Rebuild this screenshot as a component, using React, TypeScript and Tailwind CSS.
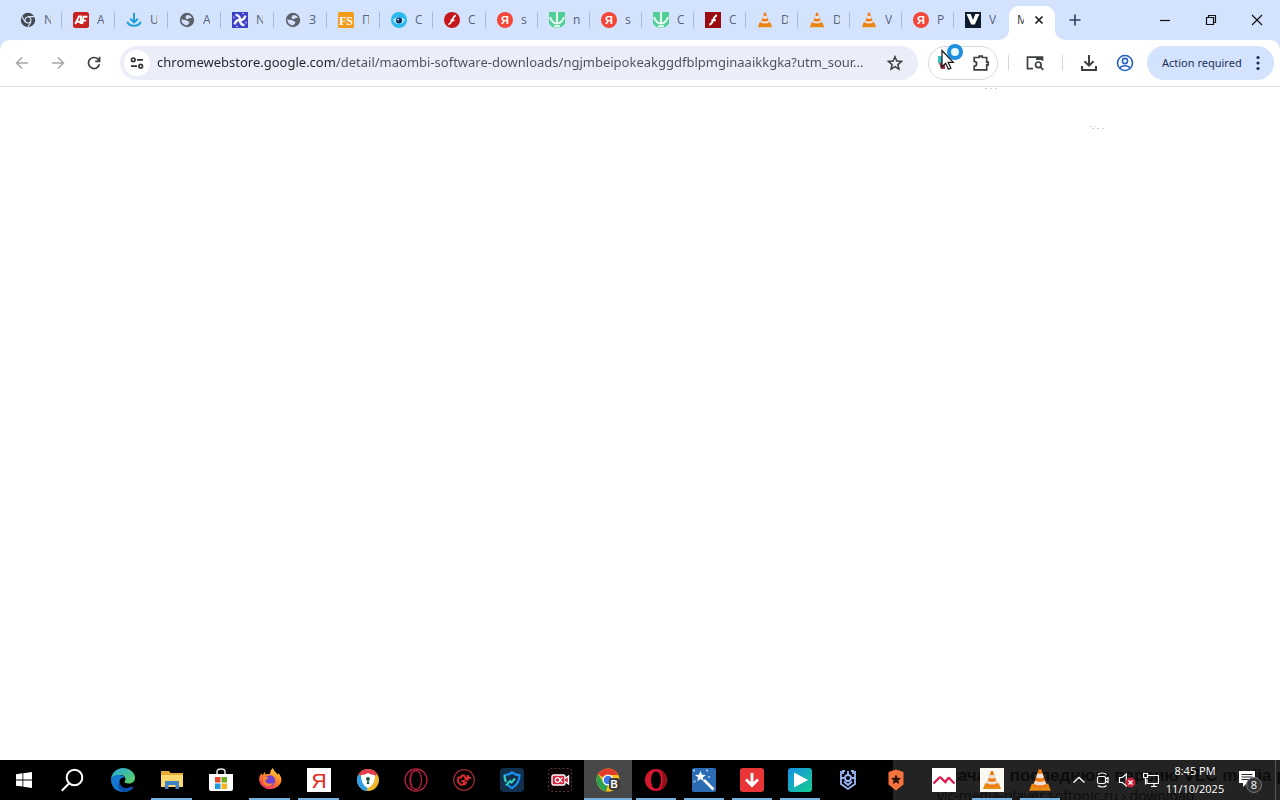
import type { ReactNode } from 'react';

interface Tab {
  label: string;
  icon: ReactNode;
}

interface TaskbarApp {
  name: string;
  icon: ReactNode;
  open?: boolean;
  active?: boolean;
}

/* ---------- tab favicons, 16x16 ---------- */

const ChromeMono = () => (
  <svg viewBox="0 0 16 16" className="size-4 shrink-0">
    <circle cx="8" cy="8" r="7.2" fill="#44484f" />
    <path d="M8 4.6h6.4M5 9.7 1.9 4.4M11 9.7 7.9 15" stroke="#d3e3fd" strokeWidth="1.1" />
    <circle cx="8" cy="8" r="3.5" fill="#d3e3fd" />
    <circle cx="8" cy="8" r="2.4" fill="#44484f" />
  </svg>
);

const AfIcon = () => (
  <svg viewBox="0 0 16 16" className="size-4 shrink-0">
    <rect width="16" height="16" rx="2.5" fill="#c9211e" />
    <path d="M2.2 12 6 4.4h2L7.6 12M3.8 9.8h4M9.2 12l1.2-7.2h4M9.8 8.6h3.4" fill="none" stroke="#fff" strokeWidth="1.9" />
  </svg>
);

const BlueDownload = () => (
  <svg viewBox="0 0 16 16" className="size-4 shrink-0" fill="none" stroke="#1e9fdc" strokeWidth="2">
    <path d="M8 1v9M4.2 6.8 8 10.4l3.8-3.6M1.4 9.8C2.4 15 13.6 15 14.6 9.8" />
  </svg>
);

const Globe = () => (
  <svg viewBox="0 0 16 16" className="size-4 shrink-0">
    <circle cx="8" cy="8" r="7.2" fill="#5b626b" />
    <path d="M8.500 3c2 0 3.600 1 4.400 2.600-1.600.9-2.400.2-3.400 1.200-.8.8-2.800.2-3-1C6.400 4.600 7.200 3.600 8.500 3Z" fill="#d3e3fd" />
    <path d="M2.400 7.200c2 .8 4 .2 5.400 1.400.8.8 2.400.6 2.600 2-.2 1.400-1.600 1.400-2.200 2.800C4.800 13.200 2.200 10.600 2.400 7.200Z" fill="#d3e3fd" />
  </svg>
);

const Pinwheel = () => (
  <svg viewBox="0 0 16 16" className="size-4 shrink-0">
    <rect width="16" height="16" fill="#3c41c4" />
    <g fill="none" stroke="#f2f3ff" strokeWidth="2.400">
      <path d="M8 8C8.200 5.400 6.600 3.400 3.600 2.600" />
      <path d="M8 8c2.600.2 4.600-1.400 5.400-4.400" />
      <path d="M8 8c-.2 2.600 1.400 4.600 4.400 5.400" />
      <path d="M8 8c-2.600-.2-4.600 1.400-5.400 4.400" />
    </g>
    <path d="M10 1.500h2M14 9.500v2M4 14.500h2M2 4.500v2" stroke="#b9bdf7" strokeWidth="1.200" />
  </svg>
);

const FsIcon = () => (
  <svg viewBox="0 0 16 16" className="size-4 shrink-0">
    <rect width="16" height="16" rx="1.500" fill="#f39a1c" />
    <text x="8" y="12.500" fontSize="12" fontWeight="700" textAnchor="middle" fill="#fff" fontFamily="Liberation Serif, serif">FS</text>
  </svg>
);

const EyeIcon = () => (
  <svg viewBox="0 0 16 16" className="size-4 shrink-0">
    <circle cx="8" cy="8" r="8" fill="#2bb9ee" />
    <path d="M2 7.800C4 4.800 12 4.800 14 7.800 13 13.500 3 13.500 2 7.800Z" fill="#a9e8fb" />
    <circle cx="8" cy="8.600" r="3" fill="#0d2857" />
    <circle cx="7.200" cy="7.600" r=".9" fill="#fff" />
  </svg>
);

const FlashRound = () => (
  <svg viewBox="0 0 16 16" className="size-4 shrink-0">
    <circle cx="8" cy="8" r="8" fill="#c4161c" />
    <path d="M11.800 3.600C8 3.600 8.600 12.200 4.400 12.400M6.400 8.300h4" fill="none" stroke="#fff" strokeWidth="1.700" />
  </svg>
);

const FlashSquare = () => (
  <svg viewBox="0 0 16 16" className="size-4 shrink-0">
    <rect width="16" height="16" fill="#9b0a10" />
    <path d="M12 3.600C8 3.600 8.600 12.600 4.200 12.600M6.400 8.300h4.400" fill="none" stroke="#fff" strokeWidth="2" />
  </svg>
);

const YandexRound = () => (
  <svg viewBox="0 0 16 16" className="size-4 shrink-0">
    <circle cx="8" cy="8" r="8" fill="#f4473a" />
    <text x="8" y="12" fontSize="11" fontWeight="700" textAnchor="middle" fill="#fff" fontFamily="Liberation Sans, sans-serif">Я</text>
  </svg>
);

const GreenDown = () => (
  <svg viewBox="0 0 16 16" className="size-4 shrink-0">
    <path d="M0 0h16v11.500C14 14.500 11 16 8 16S2 14.500 0 11.500Z" fill="#4fcf95" />
    <path d="M8 0v11.500M1 5c1.500 4.500 4 6.500 7 6.500s5.500-2 7-6.500M5 14.300h6" fill="none" stroke="#e9fbf3" strokeWidth="2" />
  </svg>
);

const Cone = ({ className }: { className: string }) => (
  <svg viewBox="0 0 16 16" className={className}>
    <path d="m2.500 10.500-1.700 4.700h14.400l-1.700-4.700Z" fill="#e88a13" />
    <path d="M7.200.800h1.600L12.600 12c-1.600 1.500-7.600 1.500-9.200 0Z" fill="#f07a12" />
    <path d="m6.300 3.500-.9 2.700c1.200.9 4 .9 5.200 0l-.9-2.700c-.9.6-2.500.6-3.400 0ZM4.700 8.400l-.7 2.100c1.800 1.400 6.200 1.400 8 0l-.7-2.100c-1.800 1.300-4.800 1.300-6.600 0Z" fill="#e9e2da" />
  </svg>
);

const VIcon = () => (
  <svg viewBox="0 0 16 16" className="size-4 shrink-0">
    <rect width="16" height="16" fill="#0c1a2b" />
    <path d="M1.500 2h4.200L8 8l2.300-6h4.200L9.800 12.500H6.200Z" fill="#fff" />
  </svg>
);

const cone = <Cone className="size-4 shrink-0" />;

const wideTabs: Tab[] = [
  { label: 'N', icon: <ChromeMono /> },
  { label: 'A', icon: <AfIcon /> },
  { label: 'U', icon: <BlueDownload /> },
  { label: 'A', icon: <Globe /> },
  { label: 'N', icon: <Pinwheel /> },
  { label: 'З', icon: <Globe /> },
  { label: 'П', icon: <FsIcon /> },
  { label: 'C', icon: <EyeIcon /> },
  { label: 'C', icon: <FlashRound /> },
];

const narrowTabs: Tab[] = [
  { label: 's', icon: <YandexRound /> },
  { label: 'n', icon: <GreenDown /> },
  { label: 's', icon: <YandexRound /> },
  { label: 'C', icon: <GreenDown /> },
  { label: 'C', icon: <FlashSquare /> },
  { label: 'D', icon: cone },
  { label: 'D', icon: cone },
  { label: 'V', icon: cone },
  { label: 'P', icon: <YandexRound /> },
  { label: 'V', icon: <VIcon /> },
];

/* ---------- taskbar icons, 24x24 ---------- */

const StartIcon = () => (
  <svg viewBox="0 0 24 24" className="size-6" fill="#fff">
    <path d="M4 6.200 10.500 5.300v6.200H4ZM11.300 5.200 20 4v7.500h-8.700ZM4 12.400h6.500v6.200L4 17.700ZM11.300 12.400H20V20l-8.700-1.200Z" />
  </svg>
);

const SearchIcon = () => (
  <svg viewBox="0 0 24 24" className="size-6" fill="none" stroke="#fff" strokeWidth="2">
    <circle cx="13.500" cy="9.500" r="7.800" />
    <path d="M8 15.500.800 22.700" />
  </svg>
);

const EdgeIcon = () => (
  <svg viewBox="0 0 24 24" className="size-6">
    <defs>
      <linearGradient id="edgeTop" x1="0" y1="0" x2="1" y2="1">
        <stop offset="0" stopColor="#25a5e0" />
        <stop offset="1" stopColor="#5fd65a" />
      </linearGradient>
    </defs>
    <path d="M0 12C0 5 5.500 0 12 0s12 4.500 12 9.500c0 4-3 6-6.500 6-2.500 0-4-.9-4-1.700 0-.8 1-1 1-2.800 0-2-2-4-5-4C5 7 1 9 0 12Z" fill="url(#edgeTop)" />
    <path d="M0 12c0-3.500 4-5.200 8-5 2.700.1 4.700 1.200 5.700 2.500C9 9 7.500 13 9 16.500c1.500 3.200 6 5 10.500 2.500 1.500-.8 3.500.2 2 1.700C19 23 15.500 24 12 24 5.500 24 0 19 0 12Z" fill="#1378d0" />
    <path d="M9 13c-1 6 5 9 10.500 6 1.500-.8 3.500.2 2 1.700C19 23 15.500 24 12 24 7 22 5.500 16 9 13Z" fill="#0c4fa8" />
  </svg>
);

const FolderIcon = () => (
  <svg viewBox="0 0 24 24" className="size-6">
    <path d="M1 3h8l1.500 2H23v14H1Z" fill="#e3ab38" />
    <path d="M1 7h22v12H1Z" fill="#fbd96f" />
    <path d="M5 13h14v8h-3.500v-4h-7v4H5Z" fill="#3f83c6" />
  </svg>
);

const StoreIcon = () => (
  <svg viewBox="0 0 24 24" className="size-6">
    <path d="M8 7V3.500C8 0 16 0 16 3.500V7" fill="none" stroke="#e8e8e8" strokeWidth="1.500" />
    <path d="M0 6h24v15a2 2 0 0 1-2 2H2a2 2 0 0 1-2-2Z" fill="#fff" />
    <path d="M6 9h5.500v5.500H6Z" fill="#e8492a" />
    <path d="M12.500 9H18v5.500h-5.500Z" fill="#6fae20" />
    <path d="M6 15.500h5.500V21H6Z" fill="#1d9be0" />
    <path d="M12.500 15.500H18V21h-5.500Z" fill="#f4b41a" />
  </svg>
);

const FirefoxIcon = () => (
  <svg viewBox="0 0 24 24" className="size-6">
    <defs>
      <linearGradient id="fox" x1=".8" y1="0" x2=".3" y2="1">
        <stop offset="0" stopColor="#ffd93b" />
        <stop offset=".5" stopColor="#ff8128" />
        <stop offset="1" stopColor="#ee2f6b" />
      </linearGradient>
    </defs>
    <path d="M1 12c0-3 1-5 2.500-7L4 7.500 7 4l.5 2.500C9 6 11 6 12 6c0-2.500 1-4.500 3-6 .5 3 3 4 5 7l.5-2c2 2.500 3 5 3 8A11.500 11 0 0 1 1 12Z" fill="url(#fox)" />
    <circle cx="12" cy="12.500" r="5.200" fill="#7141d5" />
    <path d="M5 9c2 .5 4-.5 6 1-2 .2-2 2-4 2 0 3 4 5 8 3-1.500 4-9 4-10-1Z" fill="#ff8a2a" />
  </svg>
);

const YandexIcon = () => (
  <svg viewBox="0 0 24 24" className="size-6">
    <rect width="24" height="24" fill="#fff" />
    <text x="12" y="19.500" fontSize="21" textAnchor="middle" fill="#e52620" fontFamily="Liberation Sans Narrow, Liberation Sans, sans-serif">Я</text>
  </svg>
);

const SecureBrowserIcon = () => (
  <svg viewBox="0 0 24 24" className="size-6">
    <circle cx="12" cy="12" r="11" fill="#f2b52c" />
    <path d="M12 12 2.500 6.500A11 11 0 0 1 21.500 6.500Z" fill="#e23c4d" />
    <path d="M12 12 2.500 6.500A11 11 0 0 0 11 23Z" fill="#2e9fe6" />
    <path d="M5 7c3 0 5-1 7-2 2 1 4 2 7 2 0 6-2 11-7 13C7 18 5 13 5 7Z" fill="#fff" />
    <circle cx="12" cy="11" r="2" fill="#1f5a4c" />
    <path d="m12 11-1.500 5h3Z" fill="#1f5a4c" />
  </svg>
);

const OperaGxIcon = () => (
  <svg viewBox="0 0 24 24" className="size-6" fill="none" stroke="#b3203c">
    <circle cx="12" cy="12" r="11" strokeWidth="1.300" />
    <ellipse cx="12" cy="12" rx="5.500" ry="9.500" strokeWidth="1.300" />
    <path d="M8 3c-3 3-3 15 0 18" strokeWidth=".8" />
  </svg>
);

const RedGameIcon = () => (
  <svg viewBox="0 0 24 24" className="size-6" fill="none">
    <circle cx="12" cy="12" r="10.300" stroke="#9c2a2a" strokeWidth="1.200" />
    <path d="M6 9.500h3l1-2h2l1 2M6 9.500V14l2.500 2.500H12V13H9.500M13 16.500l1.500-3M15.500 7v6M12.500 10h6.500M17 8l-4 4" stroke="#dc2c2f" strokeWidth="1.800" />
  </svg>
);

const ShieldIcon = () => (
  <svg viewBox="0 0 24 24" className="size-6">
    <rect width="24" height="24" rx="4" fill="#12304e" />
    <path d="M4.500 7C7.500 7 10 6 12 4.500 14 6 16.500 7 19.500 7c0 6-2 10-7.500 13-2-1-3.500-2-4.500-3.500" fill="none" stroke="#1b8ff0" strokeWidth="2.200" />
    <path d="M4.500 7c0 3 .5 5 1.500 7" fill="none" stroke="#31d0c3" strokeWidth="2.200" />
    <path d="M6 17.500 10 13l1.500 1.500L15 10.500" fill="none" stroke="#31d0c3" strokeWidth="2" />
  </svg>
);

const RecorderIcon = () => (
  <svg viewBox="0 0 24 24" className="size-6">
    <rect x=".5" y=".5" width="23" height="23" rx="2" fill="#0d0406" stroke="#4a3c41" strokeDasharray="2 2" />
    <rect x="4" y="7" width="13" height="10" rx="2" fill="#d81f3c" stroke="#fff" strokeWidth="1.400" />
    <path d="m17 10.500 3.500-2.500v8L17 13.500" fill="#d81f3c" stroke="#fff" strokeWidth="1.400" />
    <circle cx="9.500" cy="12" r="2.300" fill="none" stroke="#fff" strokeWidth="1.200" />
    <path d="m14.500 9.500-2.700 2.500 2.700 2.500" fill="none" stroke="#fff" strokeWidth="1.200" />
  </svg>
);

const ChromeIcon = () => (
  <svg viewBox="0 0 24 24" className="size-6">
    <circle cx="12" cy="12" r="11.500" fill="#f9c015" />
    <path d="M12 12 2 6.200A11.500 11.500 0 0 1 22 6.200V7H12Z" fill="#e33b2c" />
    <path d="M2 6.200 7.500 14.500 12 17l-2 6.300A11.500 11.500 0 0 1 2 6.200Z" fill="#2da14d" />
    <circle cx="12" cy="12" r="5.500" fill="#fff" />
    <circle cx="12" cy="12" r="4.300" fill="#3779e8" />
    <rect x="13" y="10" width="11" height="12" rx="3" fill="#3b3b3b" />
    <text x="18" y="20" fontSize="10" fontWeight="700" textAnchor="middle" fill="#fff" fontFamily="Liberation Sans, sans-serif">B</text>
  </svg>
);

const OperaIcon = () => (
  <svg viewBox="0 0 24 24" className="size-6">
    <circle cx="12" cy="12" r="11" fill="#d7172f" />
    <path d="M15 1.500A11 11 0 0 1 15 22.500c5-4 5-17 0-21Z" fill="#8f0f1c" />
    <ellipse cx="12" cy="12" rx="5" ry="8.700" fill="#000" />
  </svg>
);

const WandIcon = () => (
  <svg viewBox="0 0 24 24" className="size-6">
    <rect width="24" height="24" rx="2" fill="#2c6cb4" />
    <path d="m12 12 9.500 9.500" stroke="#fff" strokeWidth="2.600" />
    <path d="m8.500 3 1.400 3.700 4 .2-3.100 2.500 1 3.800-3.300-2.200-3.300 2.200 1-3.800L3 6.900l4-.2Z" fill="#fff" />
    <path d="M1 2.500h2M14 2.500h2M1.500 13.500h2M16 9h2" stroke="#bcdcf7" strokeWidth="1.600" />
  </svg>
);

const RedDownIcon = () => (
  <svg viewBox="0 0 24 24" className="size-6">
    <rect width="24" height="24" rx="3" fill="#e83538" />
    <path d="M12 5v12.500M6 11.500l6 6 6-6" fill="none" stroke="#fff" strokeWidth="2.800" />
  </svg>
);

const PlayIcon = () => (
  <svg viewBox="0 0 24 24" className="size-6">
    <defs>
      <linearGradient id="play" x1="0" y1="0" x2="1" y2="1">
        <stop offset="0" stopColor="#168ee8" />
        <stop offset="1" stopColor="#15cf8d" />
      </linearGradient>
    </defs>
    <rect width="24" height="24" rx="3" fill="url(#play)" />
    <path d="M6 4.500v15L20 12Z" fill="#fff" />
  </svg>
);

const BadgeIcon = () => (
  <svg viewBox="0 0 24 24" className="size-6" fill="none" stroke="#9db8fa" strokeWidth="1.800">
    <path d="M5 3v13l7 5 7-5V3M9 3H7v3M15 3h2v3M8 13.500l4 3.500 4-3.500M5 10h3M16 10h3" />
    <circle cx="12" cy="10" r="3" />
    <path d="M12 3v4" />
  </svg>
);

const StarShieldIcon = () => (
  <svg viewBox="0 0 24 24" className="size-6">
    <path d="M12 1.500 19.500 4v12.500L12 22.500l-7.500-6V4Z" fill="#f4733c" />
    <path d="m12 6.500 1.500 3.300 3.500.4-2.600 2.400.7 3.500-3.100-1.800-3.100 1.800.7-3.500L7 10.200l3.500-.4Z" fill="#25120b" />
  </svg>
);

const WaveIcon = () => (
  <svg viewBox="0 0 24 24" className="size-6">
    <rect width="24" height="24" fill="#fff" />
    <path d="m1.500 15.500 5.500-5.500c.8-.8 1.400-.8 2.200 0l5 5M12.500 14.500l3.500-4c.6-.6 1-.6 1.600 0l4.900 5" fill="none" stroke="#dd1d52" strokeWidth="2.400" />
  </svg>
);

const BoxedCone = () => (
  <span className="flex size-6 items-center justify-center bg-[#fbf8f3]">
    <Cone className="size-5" />
  </span>
);

const wideApps: TaskbarApp[] = [
  { name: 'Microsoft Edge', icon: <EdgeIcon /> },
  { name: 'File Explorer', icon: <FolderIcon />, open: true },
  { name: 'Microsoft Store', icon: <StoreIcon /> },
  { name: 'Firefox', icon: <FirefoxIcon />, open: true },
  { name: 'Yandex', icon: <YandexIcon />, open: true },
  { name: 'Secure Browser', icon: <SecureBrowserIcon /> },
];

const apps: TaskbarApp[] = [
  { name: 'Opera GX', icon: <OperaGxIcon /> },
  { name: 'Games', icon: <RedGameIcon /> },
  { name: 'Security', icon: <ShieldIcon /> },
  { name: 'Recorder', icon: <RecorderIcon /> },
  { name: 'Google Chrome', icon: <ChromeIcon />, open: true, active: true },
  { name: 'Opera', icon: <OperaIcon />, open: true },
  { name: 'Wizard', icon: <WandIcon />, open: true },
  { name: 'Downloader', icon: <RedDownIcon />, open: true },
  { name: 'Player', icon: <PlayIcon />, open: true },
  { name: 'Protection', icon: <BadgeIcon /> },
  { name: 'Shield', icon: <StarShieldIcon /> },
  { name: 'Monitor', icon: <WaveIcon /> },
  { name: 'VLC setup', icon: <BoxedCone />, open: true },
  { name: 'VLC media player', icon: <Cone className="size-6" />, open: true },
];

function TabButton({ tab, width, last }: { tab: Tab; width: string; last?: boolean }) {
  return (
    <button
      role="tab"
      aria-selected={false}
      className={`${width} flex h-10 shrink-0 items-center pl-[11px]`}
    >
      {tab.icon}
      <span className="ml-2 w-[7px] overflow-hidden text-left text-xs text-[#56617a]">{tab.label}</span>
      {!last && <span className="ml-auto h-4 w-px bg-[#a9bbdc]" />}
    </button>
  );
}

function TabStrip() {
  return (
    <header className="flex h-10 items-center bg-[#d3e3fd] pl-[9px]">
      <div role="tablist" className="flex items-end">
        {wideTabs.map((tab, i) => (
          <TabButton key={i} tab={tab} width="w-[53px]" />
        ))}
        {narrowTabs.map((tab, i) => (
          <TabButton key={i} tab={tab} width="w-[52px]" last={i === narrowTabs.length - 1} />
        ))}
        <div className="relative ml-[3px] flex h-[34px] w-[46px] items-center rounded-t-[10px] bg-white pb-1.5 pl-2">
          <svg viewBox="0 0 10 10" className="absolute bottom-0 -left-2.5 size-2.5" fill="#fff">
            <path d="M10 0v10H0A10 10 0 0 0 10 0Z" />
          </svg>
          <svg viewBox="0 0 10 10" className="absolute -right-2.5 bottom-0 size-2.5" fill="#fff">
            <path d="M0 0v10h10A10 10 0 0 1 0 0Z" />
          </svg>
          <button role="tab" aria-selected className="w-[7px] overflow-hidden text-left text-xs text-[#3a3d42]">
            M
          </button>
          <button aria-label="Close tab" className="ml-[7px] flex size-4 items-center justify-center">
            <svg viewBox="0 0 10 10" className="size-2.5" stroke="#1f1f1f" strokeWidth="1.700">
              <path d="m1.500 1.500 7 7m0-7-7 7" />
            </svg>
          </button>
        </div>
      </div>
      <button aria-label="New tab" className="ml-2 flex size-6 items-center justify-center">
        <svg viewBox="0 0 12 12" className="size-3" stroke="#33445f" strokeWidth="1.700">
          <path d="M6 .500v11M.500 6h11" />
        </svg>
      </button>
      <div className="ml-auto flex">
        <button aria-label="Minimize" className="flex h-10 w-[46px] items-center justify-center">
          <svg viewBox="0 0 12 12" className="size-3" stroke="#111" strokeWidth="1.200">
            <path d="M1 6.500h10" />
          </svg>
        </button>
        <button aria-label="Restore" className="flex h-10 w-[46px] items-center justify-center">
          <svg viewBox="0 0 12 12" className="size-3" fill="none" stroke="#111" strokeWidth="1.200">
            <path d="M1.500 3.500h7v7h-7ZM3.500 3.500v-2h7v7h-2" />
          </svg>
        </button>
        <button aria-label="Close" className="flex h-10 w-[46px] items-center justify-center">
          <svg viewBox="0 0 12 12" className="size-3" stroke="#111" strokeWidth="1.200">
            <path d="m1 1 10 10M11 1 1 11" />
          </svg>
        </button>
      </div>
    </header>
  );
}

function ToolButton({ label, children }: { label: string; children: ReactNode }) {
  return (
    <button aria-label={label} className="flex size-9 shrink-0 items-center justify-center">
      {children}
    </button>
  );
}

function Toolbar() {
  return (
    <div className="bg-[#d3e3fd]">
      <div className="flex h-[47px] items-center rounded-t-[10px] border-b border-[#dde1e6] bg-white pr-1.5 pl-1">
        <ToolButton label="Back">
          <svg viewBox="0 0 14 14" className="size-3.5" fill="none" stroke="#a3a6aa" strokeWidth="1.500">
            <path d="M13 7H1.500M7 1.500 1.500 7 7 12.500" />
          </svg>
        </ToolButton>
        <ToolButton label="Forward">
          <svg viewBox="0 0 14 14" className="size-3.5" fill="none" stroke="#a3a6aa" strokeWidth="1.500">
            <path d="M1 7h11.500M7 1.500 12.500 7 7 12.500" />
          </svg>
        </ToolButton>
        <ToolButton label="Reload">
          <svg viewBox="0 0 14 14" className="size-3.5" fill="none" stroke="#3c4043" strokeWidth="1.700">
            <path d="M12.400 8.200A5.500 5.500 0 1 1 11 3.200l1.300 1.500M12.600.800v4.500H8.200" />
          </svg>
        </ToolButton>

        <div className="ml-2 flex h-[34px] min-w-0 flex-1 items-center rounded-full bg-[#ebeef8] pl-1">
          <button aria-label="View site information" className="flex size-[26px] shrink-0 items-center justify-center rounded-full bg-white">
            <svg viewBox="0 0 14 14" className="size-3.5" fill="none" stroke="#303236" strokeWidth="1.700">
              <circle cx="3.300" cy="3.800" r="1.800" />
              <circle cx="10.700" cy="10.200" r="1.800" />
              <path d="M7 3.800h6M1 10.200h6" />
            </svg>
          </button>
          <input
            aria-label="Address and search bar"
            defaultValue="chromewebstore.google.com/detail/maombi-software-downloads/ngjmbeipokeakggdfblpmginaaikkgka?utm_sour..."
            className="ml-[7px] min-w-0 flex-1 bg-[linear-gradient(90deg,#202329_180px,#4a4e57_180px)] bg-clip-text font-['Noto_Sans',sans-serif] text-[13px] text-transparent outline-none"
          />
          <button aria-label="Bookmark this tab" className="flex size-9 shrink-0 items-center justify-center">
            <svg viewBox="0 0 16 16" className="size-4" fill="none" stroke="#3c4043" strokeWidth="1.500">
              <path d="m8 1.800 1.800 4.300 4.700.4-3.600 3.100 1.100 4.600L8 11.700l-4 2.500 1.100-4.600-3.600-3.100 4.700-.4Z" />
            </svg>
          </button>
          <span className="w-[5px]" />
        </div>

        <div className="relative ml-2.5 flex h-[34px] w-[70px] items-center rounded-full border border-[#d5d9de]">
          <button aria-label="Extension" className="flex size-8 items-center justify-center">
            <svg viewBox="0 0 16 16" className="size-4">
              <path d="M1 1h7v7H1Z" fill="#38bfc0" />
              <path d="M2 8h6v6H4Z" fill="#a12c46" />
            </svg>
          </button>
          <button aria-label="Extensions" className="ml-1 flex size-8 items-center justify-center">
            <svg viewBox="0 0 18 18" className="size-[18px]" fill="none" stroke="#3c4043" strokeWidth="1.700">
              <path d="M2.200 3.500h5V2.200h3v1.300h4.500v4.600h1.500v2.800h-1.500v4.900H2.200v-3.700a2.300 2.300 0 0 0 0-4.800Z" />
            </svg>
          </button>
          {/* busy pointer */}
          <svg viewBox="0 0 26 30" className="pointer-events-none absolute -top-1.5 left-3 h-[30px] w-[26px]">
            <circle cx="14" cy="11" r="6" fill="#e8f6ff" stroke="#1c8fe0" strokeWidth="4" />
            <path d="M1 9.500v16.300l3.700-3.500 2.700 6 2.500-1.100-2.700-5.800h5.100Z" fill="#fff" stroke="#111" strokeWidth="1.200" />
          </svg>
        </div>

        <span className="mr-2 ml-2.5 h-4 w-px bg-[#cfd8e6]" />
        <ToolButton label="Search tabs">
          <svg viewBox="0 0 18 16" className="h-4 w-[18px]" fill="none" stroke="#3c4043" strokeWidth="1.700">
            <path d="M7 13.600H1.500V2.200h15v3.600M10 4h6.500" />
            <path d="M10 3.500h6.500" strokeWidth="2.500" />
            <circle cx="12.300" cy="9.800" r="2.800" />
            <path d="m14.300 11.800 3 3" />
          </svg>
        </ToolButton>
        <span className="mr-2 ml-[9px] h-4 w-px bg-[#cfd8e6]" />
        <ToolButton label="Downloads">
          <svg viewBox="0 0 18 18" className="size-[18px]" fill="none" stroke="#3c4043" strokeWidth="2">
            <path d="M9 1v10.500M4.500 7.200 9 11.700l4.500-4.500M2 12v4h14v-4" />
          </svg>
        </ToolButton>
        <ToolButton label="Profile">
          <svg viewBox="0 0 18 18" className="size-[18px]" fill="none" stroke="#2660c2" strokeWidth="1.600">
            <circle cx="9" cy="9" r="7.500" />
            <circle cx="9" cy="7" r="2.600" />
            <path d="M3.800 14.200c2-3.200 8.400-3.200 10.400 0" />
          </svg>
        </ToolButton>
        <button className="ml-1 flex h-[34px] w-[127px] shrink-0 items-center rounded-full bg-[#d3e3fd] pr-3.5 pl-[15px] font-['Noto_Sans',sans-serif] text-[11px] text-[#1b2f57]">
          Action required
          <svg viewBox="0 0 4 16" className="ml-auto h-4 w-1" fill="#1b2f57">
            <circle cx="2" cy="2.500" r="1.600" />
            <circle cx="2" cy="8" r="1.600" />
            <circle cx="2" cy="13.500" r="1.600" />
          </svg>
        </button>
      </div>
    </div>
  );
}

function AppButton({ app, width }: { app: TaskbarApp; width: string }) {
  return (
    <button
      aria-label={app.name}
      className={`${width} relative flex h-10 shrink-0 items-center justify-center ${app.active ? 'bg-[#474849]' : ''}`}
    >
      {app.icon}
      {app.open && (
        <span className={`absolute bottom-0 h-0.5 bg-[#76b0df] ${app.active ? 'inset-x-0' : 'inset-x-1'}`} />
      )}
    </button>
  );
}

function Taskbar() {
  return (
    <footer className="relative flex h-10 items-center overflow-hidden bg-black text-white">
      {/* translucent end of the bar with the window behind showing through */}
      <div className="absolute inset-y-0 right-0 w-[387px] overflow-hidden bg-[#232323] pl-11 whitespace-nowrap text-[#0c0c0c]">
        <p className="pt-1 font-['Liberation_Sans',sans-serif] text-[17px] leading-6 font-bold">
          Скачать последнюю версию VLC media player
        </p>
        <p className="text-sm leading-4">vlc-media-player.softonic.ru › download</p>
      </div>

      <nav className="relative flex">
        <button aria-label="Start" className="flex h-10 w-12 items-center justify-center">
          <StartIcon />
        </button>
        <button aria-label="Search" className="flex h-10 w-[50px] items-center justify-center">
          <SearchIcon />
        </button>
        {wideApps.map((app) => (
          <AppButton key={app.name} app={app} width="w-[49px]" />
        ))}
        {apps.map((app) => (
          <AppButton key={app.name} app={app} width="w-12" />
        ))}
      </nav>

      <div className="relative ml-auto flex items-center">
        <button aria-label="Show hidden icons" className="flex h-10 w-6 items-center justify-center">
          <svg viewBox="0 0 14 14" className="size-3.5" fill="none" stroke="#fff" strokeWidth="1.300">
            <path d="m1.500 9.500 5.500-5 5.500 5" />
          </svg>
        </button>
        <button aria-label="Meet Now" className="flex h-10 w-6 items-center justify-center">
          <svg viewBox="0 0 16 16" className="size-4" fill="none" stroke="#fff" strokeWidth="1.200">
            <rect x="2.500" y="4.500" width="8" height="7" rx="1.500" />
            <path d="m10.500 7 2.500-1.500v5L10.500 9M3 2.500C5 .500 9.500.500 11.500 2.500M3 13.500c2 2 6.500 2 8.500 0" />
          </svg>
        </button>
        <button aria-label="Volume muted" className="flex h-10 w-6 items-center justify-center">
          <svg viewBox="0 0 18 16" className="h-4 w-[18px]" fill="none">
            <path d="M1.500 5.500h2.800l4-3.500v12l-4-3.500H1.500Z" stroke="#fff" strokeWidth="1.200" />
            <circle cx="12.500" cy="10.500" r="5" fill="#c8223a" />
            <path d="m10.500 8.500 4 4m0-4-4 4" stroke="#fff" strokeWidth="1.300" />
          </svg>
        </button>
        <button aria-label="Network" className="flex h-10 w-6 items-center justify-center">
          <svg viewBox="0 0 16 16" className="size-4" fill="none" stroke="#fff" strokeWidth="1.200">
            <path d="M5 3.500h10.500v8H4V7M8 14.500h6M11 11.500v3M.500 1.500h4v4h-4ZM2.500 5.500v7" />
          </svg>
        </button>
        <button className="flex h-10 w-16 flex-col items-center justify-center text-[11px] leading-[18px]">
          <span>8:45 PM</span>
          <span>11/10/2025</span>
        </button>
        <button aria-label="Notifications" className="flex h-10 w-12 items-center pl-2">
          <svg viewBox="0 0 28 26" className="h-[26px] w-7">
            <path d="M4 4h16v12h-8l-4 4v-4H4Z" fill="#fff" />
            <path d="M6.500 7.500h11M6.500 10h11M6.500 12.500h8" stroke="#232323" />
            <circle cx="19" cy="18" r="7.500" fill="#343434" stroke="#777" />
            <text x="19" y="22" fontSize="11" textAnchor="middle" fill="#fff">8</text>
          </svg>
        </button>
        <span className="h-10 w-px bg-[#555]" />
        <span className="w-1" />
      </div>
    </footer>
  );
}

export default function App() {
  return (
    <div className="flex min-h-screen flex-col bg-white font-['Open_Sans','Noto_Sans',sans-serif]">
      <TabStrip />
      <Toolbar />
      <main className="relative flex-1 bg-white">
        {/* faint specks left over while the page is still painting */}
        <svg viewBox="0 0 120 44" className="absolute top-0 right-[176px] h-11 w-[120px]" stroke="#d2d2d2" strokeWidth="1" strokeDasharray="2 3">
          <path d="M1 1.500h14M106 39.500h6M108 41.500h12" />
        </svg>
      </main>
      <Taskbar />
    </div>
  );
}
